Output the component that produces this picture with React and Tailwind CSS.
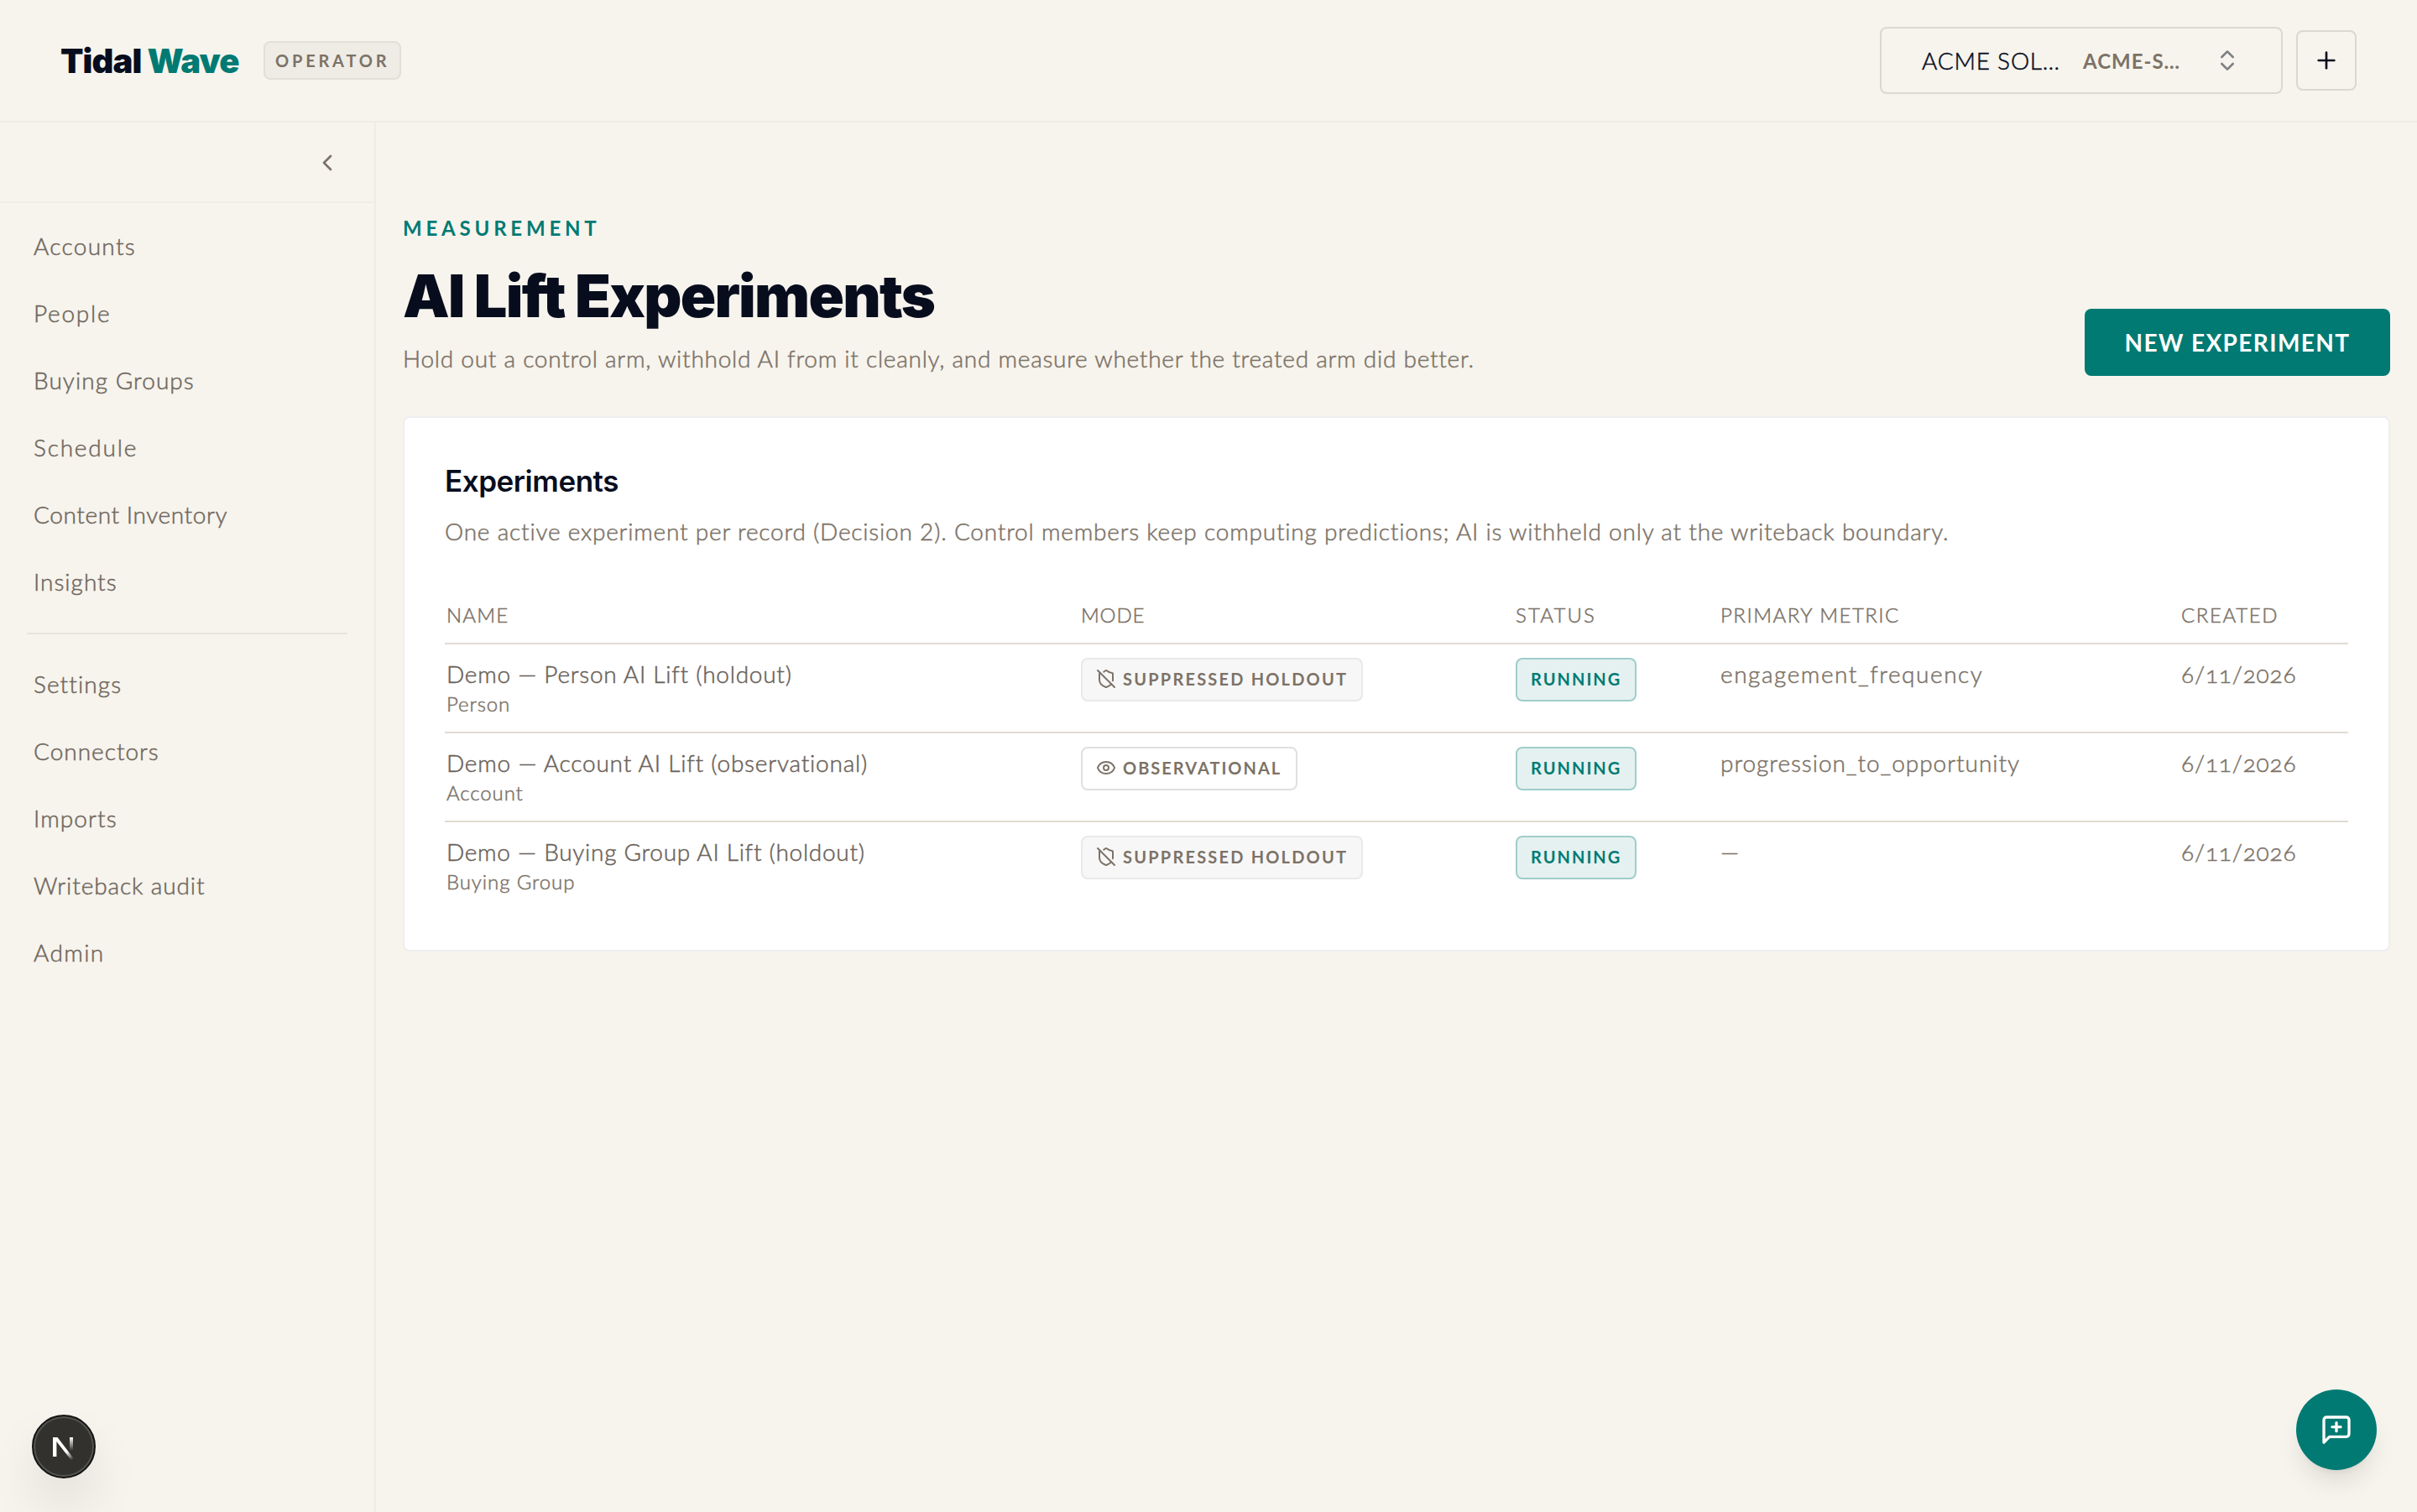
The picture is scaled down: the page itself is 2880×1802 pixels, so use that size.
import React from 'react'
import { ChevronLeft, ChevronsUpDown, Eye, Plus, ShieldOff } from 'lucide-react'

const primaryNav = [
  { label: 'Accounts', track: 'tracking-[1.3px]' },
  { label: 'People', track: 'tracking-[1.75px]' },
  { label: 'Buying Groups', track: 'tracking-[1.05px]' },
  { label: 'Schedule', track: 'tracking-[1.8px]' },
  { label: 'Content Inventory', track: 'tracking-[0.6px]' },
  { label: 'Insights', track: 'tracking-[1px]' },
]

const secondaryNav = [
  { label: 'Settings', track: 'tracking-[1.1px]' },
  { label: 'Connectors', track: 'tracking-[1px]' },
  { label: 'Imports', track: 'tracking-[1.1px]' },
  { label: 'Writeback audit', track: 'tracking-[0.9px]' },
  { label: 'Admin', track: 'tracking-[1.4px]' },
]

const experiments = [
  {
    name: 'Demo — Person AI Lift (holdout)',
    nameTrack: 'tracking-[0.75px]',
    type: 'Person',
    holdout: true,
    metric: 'engagement_frequency',
    metricTrack: 'tracking-[1.55px]',
  },
  {
    name: 'Demo — Account AI Lift (observational)',
    nameTrack: 'tracking-[0.8px]',
    type: 'Account',
    holdout: false,
    metric: 'progression_to_opportunity',
    metricTrack: 'tracking-[0.97px]',
  },
  {
    name: 'Demo — Buying Group AI Lift (holdout)',
    nameTrack: 'tracking-[0.72px]',
    type: 'Buying Group',
    holdout: true,
    metric: '—',
    metricTrack: 'tracking-normal',
  },
]

function NavItem({ item }) {
  return (
    <a
      className={`flex h-20 items-center pb-0.5 pl-10 text-[28px] font-light text-[#70675e] [-webkit-text-stroke:0.5px] ${item.track}`}
    >
      {item.label}
    </a>
  )
}

function Header() {
  return (
    <header className="flex h-[146px] shrink-0 items-center justify-between border-b-2 border-[#efece5] px-[72px]">
      <div className="flex items-center">
        <div className="w-[242px] whitespace-nowrap pt-0.5 font-['Inter'] text-[40px] font-black leading-none tracking-[-0.9px] text-[#080d1e]">
          Tidal <span className="text-[#007a73]">Wave</span>
        </div>
        <span className="flex h-[46px] w-[164px] items-center rounded-lg border-2 border-[#e2dfd9] bg-[#efece6] pl-3 text-xl font-bold tracking-[3.8px] text-[#7c7267]">
          OPERATOR
        </span>
      </div>
      <div className="flex items-center gap-4">
        <div className="flex h-20 w-[480px] items-center rounded-lg border-2 border-[#dbd8d0] pl-12 pr-12">
          <span className="w-[192px] whitespace-nowrap pb-px text-[28px] font-light tracking-[0.8px] text-[#080d1e] [-webkit-text-stroke:0.5px]">
            ACME SOL…
          </span>
          <span className="whitespace-nowrap pt-0.5 text-2xl font-bold tracking-[1px] text-[#7c7267]">ACME-S…</span>
          <ChevronsUpDown className="ml-auto h-8 w-8 text-[#080d1e]/50" />
        </div>
        <button className="flex h-[72px] w-[72px] items-center justify-center rounded-lg border-2 border-[#dbd8d0] text-[#080d1e]">
          <Plus className="h-8 w-8" />
        </button>
      </div>
    </header>
  )
}

function Sidebar() {
  return (
    <aside className="w-[448px] shrink-0 border-r-2 border-[#efece5]">
      <div className="flex h-24 items-center justify-end border-b-2 border-[#efece5] pr-10 pt-0.5">
        <ChevronLeft className="h-8 w-8 text-[#7c7267]" />
      </div>
      <nav className="pt-3">
        {primaryNav.map((item) => (
          <NavItem key={item.label} item={item} />
        ))}
        <div className="mx-8 my-5 h-0.5 bg-[#e8e4dd]" />
        {secondaryNav.map((item) => (
          <NavItem key={item.label} item={item} />
        ))}
      </nav>
    </aside>
  )
}

function ModeBadge({ holdout }) {
  if (holdout) {
    return (
      <span className="mt-px flex h-[52px] w-[336px] items-center gap-2 rounded-lg border-2 border-[#e9e9e9] bg-[#f7f7f7] pb-0.5 pl-4 text-xl font-bold tracking-[2.2px] text-[#7c7267] [-webkit-text-stroke:0px]">
        <ShieldOff className="h-6 w-6" />
        SUPPRESSED HOLDOUT
      </span>
    )
  }
  return (
    <span className="mt-px flex h-[52px] w-[258px] items-center gap-2 rounded-lg border-2 border-[#e0e0e1] pb-0.5 pl-4 text-xl font-bold tracking-[2px] text-[#7c7267] [-webkit-text-stroke:0px]">
      <Eye className="h-6 w-6" />
      OBSERVATIONAL
    </span>
  )
}

function ExperimentsTable() {
  return (
    <div className="mt-11 font-light text-[#7c7267] [-webkit-text-stroke:0.5px]">
      <div className="grid h-[68px] grid-cols-[756px_518px_244px_549px_1fr] items-center border-b-2 border-[#e0dcd1] pl-0.5 text-2xl">
        <span className="tracking-[1.2px]">NAME</span>
        <span className="tracking-[0.8px]">MODE</span>
        <span className="tracking-[2.1px]">STATUS</span>
        <span className="tracking-[1.5px]">PRIMARY METRIC</span>
        <span className="tracking-[1.6px]">CREATED</span>
      </div>
      {experiments.map((row) => (
        <div
          key={row.name}
          className="grid h-[106px] grid-cols-[756px_518px_244px_549px_1fr] items-start whitespace-nowrap border-b-2 border-[#e0dcd1] pl-0.5 pt-[15px] text-[28px] leading-10 last:border-b-0"
        >
          <div>
            <div className={`text-[#6b6259] ${row.nameTrack}`}>{row.name}</div>
            <div className="text-2xl leading-8 tracking-[0.9px]">{row.type}</div>
          </div>
          <ModeBadge holdout={row.holdout} />
          <span className="mt-px flex h-[52px] w-36 items-center rounded-lg border-2 border-[#a0cdca] bg-[#e5f1f0] pb-0.5 pl-4 text-xl font-bold tracking-[2px] text-[#007a73] [-webkit-text-stroke:0px]">
            RUNNING
          </span>
          <span className={row.metricTrack}>{row.metric}</span>
          <span className="tracking-[0.8px] oldstyle-nums">6/11/2026</span>
        </div>
      ))}
    </div>
  )
}

function DevBadge() {
  return (
    <div className="fixed bottom-10 left-[38px] flex h-[76px] w-[76px] items-center justify-center rounded-full border-2 border-[#151515] bg-[#32312e] shadow-[inset_0_0_0_2px_#545452,0_32px_64px_-8px_rgba(0,0,0,0.14)]">
      <svg className="h-10 w-10" viewBox="0 0 40 40" fill="none">
        <defs>
          <linearGradient id="diagonal" x1="18" y1="20" x2="30" y2="36" gradientUnits="userSpaceOnUse">
            <stop offset="0.4" stopColor="#fff" />
            <stop offset="1" stopColor="#fff" stopOpacity="0" />
          </linearGradient>
          <linearGradient id="stem" x1="28" y1="9" x2="28" y2="25" gradientUnits="userSpaceOnUse">
            <stop stopColor="#fff" />
            <stop offset="1" stopColor="#fff" stopOpacity="0" />
          </linearGradient>
        </defs>
        <rect x="7" y="9" width="4.4" height="23" fill="#fff" />
        <path d="M7 9h5.5L32 34.5l-3 2L9 11z" fill="url(#diagonal)" />
        <rect x="27" y="9" width="4" height="16" fill="url(#stem)" />
      </svg>
    </div>
  )
}

function FeedbackButton() {
  return (
    <button className="fixed bottom-[50px] right-12 flex h-24 w-24 items-center justify-center rounded-full bg-[#007a73] text-white shadow-[0_20px_30px_-6px_rgba(0,0,0,0.1),0_8px_12px_-8px_rgba(0,0,0,0.1)]">
      <svg
        className="h-10 w-10"
        viewBox="0 0 24 24"
        fill="none"
        stroke="currentColor"
        strokeWidth="2"
        strokeLinecap="round"
        strokeLinejoin="round"
      >
        <path d="M21 15a2 2 0 0 1-2 2H7l-4 4V5a2 2 0 0 1 2-2h14a2 2 0 0 1 2 2z" />
        <path d="M12 7v6" />
        <path d="M9 10h6" />
      </svg>
    </button>
  )
}

export default function App() {
  return (
    <div className="flex h-[1802px] w-[2880px] flex-col overflow-hidden bg-[#f7f4ed] font-['Lato',sans-serif]">
      <Header />
      <div className="flex flex-1">
        <Sidebar />
        <main className="flex-1 px-8 pt-[106px]">
          <div className="flex h-[244px] items-start justify-between">
            <div className="whitespace-nowrap">
              <div className="text-2xl font-bold leading-10 tracking-[4.8px] text-[#007a73]">MEASUREMENT</div>
              <h1 className="mt-4 font-['Inter'] text-[70px] font-black leading-[90px] tracking-[-1.7px] text-[#080d1e]">
                AI Lift Experiments
              </h1>
              <p className="mt-[9px] text-[28px] font-light leading-10 tracking-[0.75px] text-[#7c7267] [-webkit-text-stroke:0.5px]">
                Hold out a control arm, withhold AI from it cleanly, and measure whether the treated arm did better.
              </p>
            </div>
            <button className="mt-[116px] h-20 w-[364px] rounded-lg bg-[#007a73] text-[28px] font-bold tracking-[1.4px] text-white">
              NEW EXPERIMENT
            </button>
          </div>
          <section className="h-[638px] rounded-lg border-2 border-[#eeeeee] bg-white px-12 pt-[47px]">
            <h2 className="font-['Inter'] text-[35px] font-semibold leading-[56px] tracking-[-0.45px] text-[#080d1e]">
              Experiments
            </h2>
            <p className="mt-2.5 whitespace-nowrap pb-px text-[28px] font-light leading-[44px] tracking-[0.8px] text-[#7c7267] [-webkit-text-stroke:0.5px]">
              One active experiment per record (Decision 2). Control members keep computing predictions; AI is withheld
              only at the writeback boundary.
            </p>
            <ExperimentsTable />
          </section>
        </main>
      </div>
      <DevBadge />
      <FeedbackButton />
    </div>
  )
}
